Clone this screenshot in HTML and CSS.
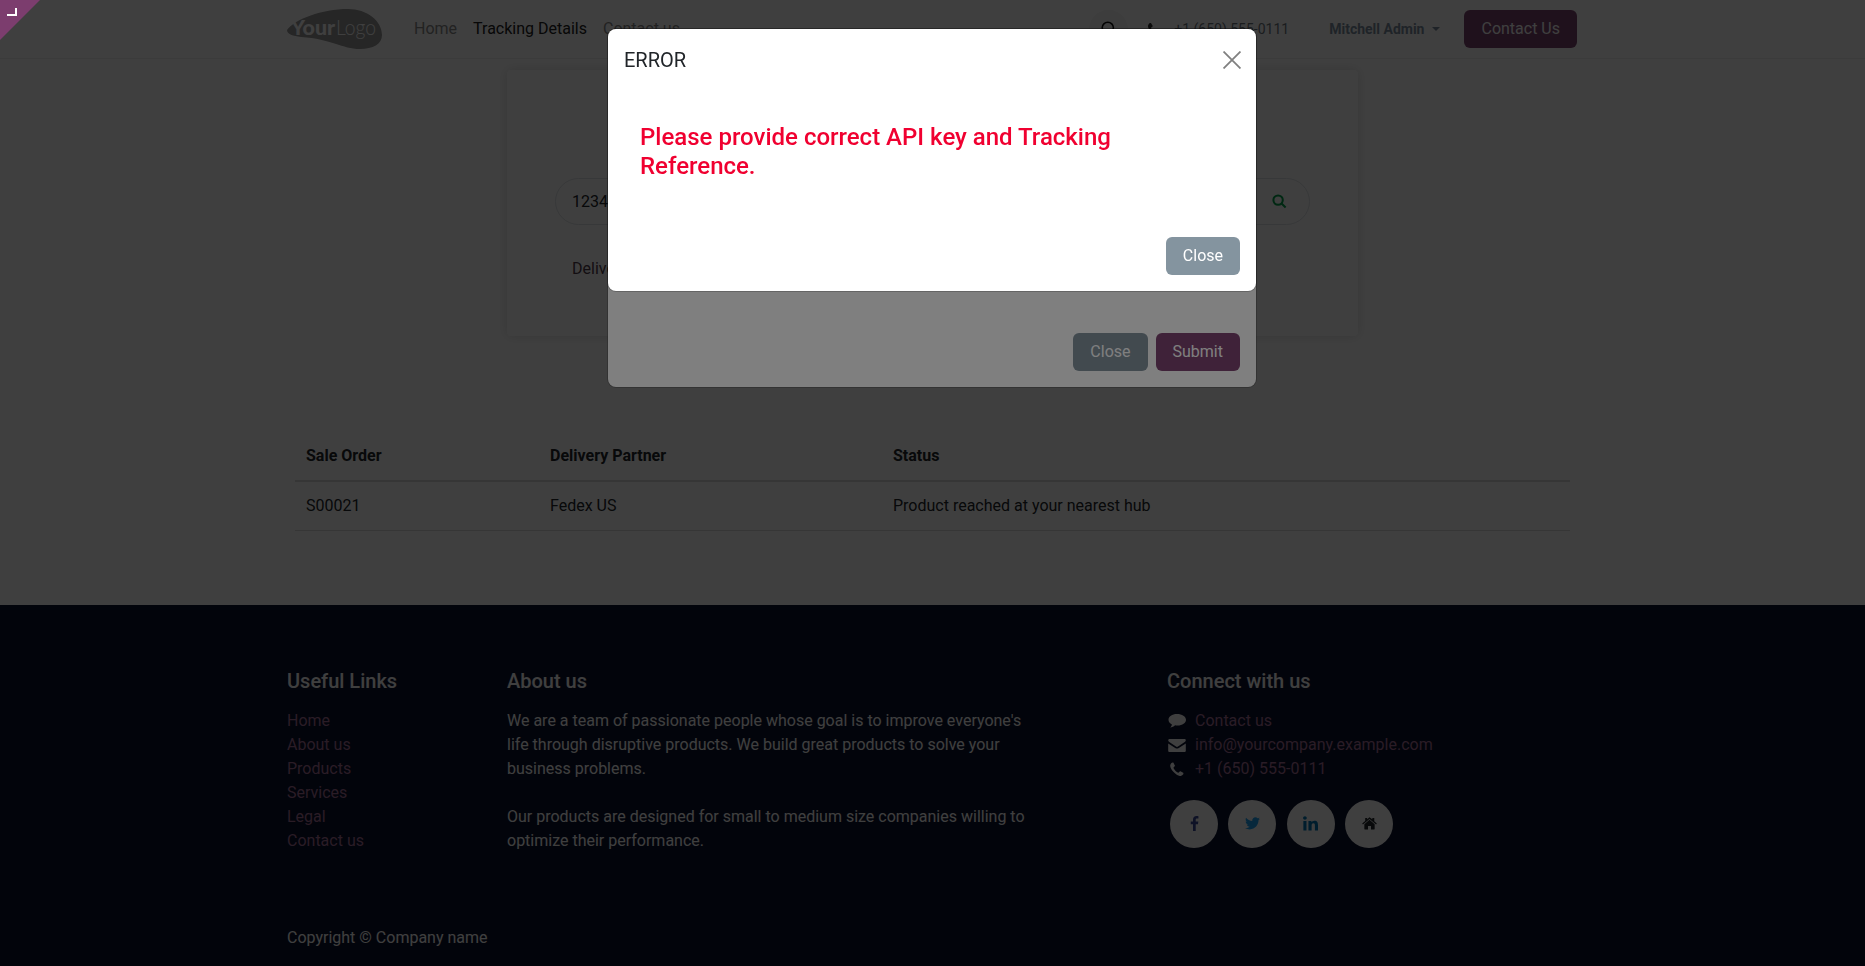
FILE: index.html
```html
<!DOCTYPE html>
<html lang="en">
<head>
  <meta charset="UTF-8" />
  <meta name="viewport" content="width=device-width, initial-scale=1.0" />
  <title>Tracking Details</title>
  <link rel="stylesheet" href="styles.css">
</head>
<body>
  <div id="page">
    <header id="navbar">
      <div class="container nav-row">
        <svg class="logo" viewBox="0 0 95 40">
          <path class="logo-blob" d="M0 21C8 10 35 0 61 0C80 0 95 12 95 26C95 35 86 40 73 40C55 40 45 30 14 28C6 27 0 25 0 21Z"/>
          <text class="logo-your" x="4" y="26" textLength="44" lengthAdjust="spacingAndGlyphs">Your</text>
          <text class="logo-logo" x="49" y="26" textLength="40" lengthAdjust="spacingAndGlyphs">Logo</text>
        </svg>
        <nav class="nav-links">
          <a href="#">Home</a>
          <a href="#" class="active">Tracking Details</a>
          <a href="#">Contact us</a>
        </nav>
        <div class="nav-right">
          <span class="search-circle">
            <svg viewBox="0 0 16 16" class="search-icon"><circle cx="6.8" cy="6.8" r="5.6"/><path d="M11 11l4.2 4.2"/></svg>
          </span>
          <svg class="nav-phone" viewBox="0 0 1408 1408"><path d="M1408 1112q0 27-10 70.5t-21 68.5q-21 50-122 106-94 51-186 51-27 0-53-3.500t-57.500-12.500-47-14.500-55.500-20.500-49-18q-98-35-175-83-127-79-264-216t-216-264q-48-77-83-175-3-9-18-49t-20.500-55.500-14.500-47-12.500-57.500-3.500-53q0-92 51-186 56-101 106-122 25-11 68.500-21t70.500-10q14 0 21 3 18 6 53 76 11 19 30 54t35 63.500 31 53.500q3 4 17.500 25t21.500 35.500 7 28.500q0 20-28.500 50t-62 55-62 53-28.500 46q0 9 5 22.500t8.500 20.500 14 24 11.500 19q76 137 174 235t235 174q2 1 19 11.500t24 14 20.500 8.500 22.500 5q18 0 46-28.500t53-62 55-62 50-28.500q14 0 28.500 7t35.500 21.500 25 17.500q25 15 53.500 31t63.500 35 54 30q70 35 76 53 3 7 3 21z"/></svg>
          <span class="nav-tel">+1 (650) 555-0111</span>
          <span class="nav-user">Mitchell Admin<i class="caret"></i></span>
          <a href="#" class="btn btn-primary">Contact Us</a>
        </div>
      </div>
    </header>

    <main>
      <section class="track-card">
        <div class="track-input">
          <span>1234567890</span>
          <svg viewBox="0 0 16 16" class="track-search"><circle cx="6.5" cy="6.5" r="5"/><path d="M10.200 10.200l4.300 4.300"/></svg>
        </div>
        <p class="track-note">Delivery Partner</p>
      </section>

      <div class="container">
        <table class="orders">
          <thead>
            <tr><th class="col-order">Sale Order</th><th class="col-partner">Delivery Partner</th><th>Status</th></tr>
          </thead>
          <tbody>
            <tr><td>S00021</td><td>Fedex US</td><td>Product reached at your nearest hub</td></tr>
          </tbody>
        </table>
      </div>
    </main>

    <footer id="footer">
      <div class="container">
        <div class="footer-cols">
          <div>
            <h5>Useful Links</h5>
            <ul class="footer-list">
              <li><a href="#">Home</a></li>
              <li><a href="#">About us</a></li>
              <li><a href="#">Products</a></li>
              <li><a href="#">Services</a></li>
              <li><a href="#">Legal</a></li>
              <li><a href="#">Contact us</a></li>
            </ul>
          </div>
          <div>
            <h5>About us</h5>
            <p class="about">We are a team of passionate people whose goal is to improve everyone's life through disruptive products. We build great products to solve your business problems.</p>
            <p class="about">Our products are designed for small to medium size companies willing to optimize their performance.</p>
          </div>
          <div>
            <h5>Connect with us</h5>
            <ul class="footer-list">
              <li class="contact-row">
                <svg viewBox="0 0 18 16"><path d="M9 1C4 1 .5 3.500.5 6.800c0 2 1.300 3.700 3.400 4.700-.2 1.300-.9 2.300-1.800 3 2 0 3.700-.9 4.900-2.200.8.2 1.600.3 2.500.3 5 0 8.500-2.600 8.500-5.800S14 1 9 1z"/></svg>
                <a href="#">Contact us</a>
              </li>
              <li class="contact-row">
                <svg viewBox="0 0 18 16"><path d="M1.500 2h15c.7 0 1.300.6 1.300 1.200 0 .8-.5 1.400-1.100 1.900L10 9.600c-.6.4-1.400.4-2 0L1.300 5.100C.7 4.600.2 4 .2 3.300.2 2.600.8 2 1.500 2zM.2 6.400 7.200 11c1.100.7 2.500.7 3.600 0l7-4.600v7.300c0 .7-.6 1.300-1.300 1.300h-15c-.7 0-1.300-.6-1.300-1.300z"/></svg>
                <a href="#">info@yourcompany.example.com</a>
              </li>
              <li class="contact-row">
                <svg viewBox="-2 -1 18 16"><path d="M13.500 10.800c0 .3-.1.700-.2 1.100-.1.300-.2.500-.3.700-.2.500-1.200 1-2 1.300-.6.200-1.300.1-1.900-.1-1-.3-1.800-.7-2.700-1.300-1.200-.8-2.300-1.800-3.300-2.900-.9-1-1.700-2.100-2.200-3.300C.5 5.400.2 4.600.2 3.700.2 2.800.7 1.800 1.200 1.200 1.600.8 2.300.5 2.800.4c.2 0 .3 0 .4.1.2.1.4.6.5.8.3.5.7 1.300.9 1.800.1.200.3.400.3.700 0 .6-1.400 1.300-1.400 1.900 0 .4.700 1.400 1.100 2 .7 1 1.700 1.900 2.600 2.500.3.200.8.500 1.100.500.6 0 1.300-1.400 1.900-1.400.2 0 .5.200.7.300.5.300 1.300.7 1.800 1 .2.100.7.300.8.500z"/></svg>
                <a href="#">+1 (650) 555-0111</a>
              </li>
            </ul>
            <div class="socials">
              <a href="#" class="social social-fb"><svg viewBox="0 0 16 16"><path d="M9.300 16V8.700h2.400l.4-2.800H9.300V4.100c0-.8.200-1.400 1.400-1.400h1.500V.2C11.900.1 11 0 10 0 7.900 0 6.400 1.300 6.400 3.800v2.100H4v2.800h2.400V16z"/></svg></a>
              <a href="#" class="social social-tw"><svg viewBox="0 0 16 14"><path d="M16 1.900c-.6.3-1.200.4-1.900.5.700-.4 1.200-1 1.400-1.800-.6.400-1.300.6-2.100.8C12.800.7 12 .3 11 .3c-1.800 0-3.300 1.500-3.300 3.300 0 .3 0 .5.100.7C5.100 4.200 2.700 2.900 1.100.9.800 1.400.7 2 .7 2.600c0 1.100.6 2.100 1.500 2.700-.5 0-1-.2-1.500-.4 0 1.600 1.100 2.900 2.600 3.200-.3.100-.6.100-.9.100-.2 0-.4 0-.6-.1.4 1.300 1.600 2.300 3.100 2.300-1.100.9-2.500 1.400-4.100 1.400H0C1.500 12.800 3.200 13.300 5 13.300c6 0 9.400-5 9.400-9.400V3.500c.6-.4 1.200-1 1.600-1.600z"/></svg></a>
              <a href="#" class="social social-in"><svg viewBox="0 0 16 16"><path d="M.4 5.300h3.300V15.500H.4zM2.100.3c1.100 0 1.900.8 1.900 1.800S3.200 3.900 2.100 3.900.1 3.100.1 2.100.9.300 2.100.3zM5.800 5.300h3.200v1.400c.5-.9 1.600-1.700 3.200-1.700 3.200 0 3.800 2.100 3.800 4.900v5.600h-3.300v-5c0-1.200 0-2.700-1.600-2.700s-1.900 1.300-1.900 2.600v5.100H5.800z"/></svg></a>
              <a href="#" class="social social-home"><svg viewBox="0 0 16 14"><path d="M8 3.100 2.500 7.700v5.100c0 .3.200.5.500.5h3.400V9.600h3.200v3.700H13c.3 0 .5-.2.500-.5V7.700zM8 .4 5.500 2.500V1H3.400v3.300L.2 7l.8 1L8 2.100 15 8l.8-1-2.700-2.300V1H11v1.500z"/></svg></a>
            </div>
          </div>
        </div>
        <p class="copyright">Copyright &copy; Company name</p>
      </div>
    </footer>
  </div>

  <!-- first modal, sits under the error one -->
  <div class="backdrop"></div>
  <div class="dialog dialog-lower">
    <div class="dialog-foot">
      <button class="btn btn-secondary">Close</button>
      <button class="btn btn-primary">Submit</button>
    </div>
  </div>

  <!-- error modal -->
  <div class="backdrop"></div>
  <div class="dialog dialog-error">
    <div class="dialog-head">
      <h4>ERROR</h4>
      <svg class="dialog-x" viewBox="0 0 16 16"><path d="M.5.500l15 15M15.500.500l-15 15"/></svg>
    </div>
    <div class="dialog-body">
      <p class="error-msg">Please provide correct API key and Tracking Reference.</p>
    </div>
    <div class="dialog-foot">
      <button class="btn btn-secondary">Close</button>
    </div>
  </div>

  <!-- editor corner -->
  <a href="#" class="corner"><i class="corner-mark"></i></a>
</body>
</html>
```

FILE: styles.css
```css
* {
  box-sizing: border-box;
}

body {
  margin: 0;
  overflow: hidden;
  background: #fff;
  color: #212529;
  font-family: Roboto, "Liberation Sans", sans-serif;
  font-size: 16px;
  line-height: 24px;
}

a {
  text-decoration: none;
}

#page {
  display: flex;
  flex-direction: column;
  height: 966px;
}

.container {
  width: 1320px;
  margin: 0 0 0 272px;
  padding: 0 15px;
}

/* navbar */
#navbar {
  height: 59px;
  border-bottom: 1px solid #ececec;
  flex: none;
}

.nav-row {
  display: flex;
  align-items: center;
  height: 58px;
}

.logo {
  width: 95px;
  height: 40px;
  flex: none;
}

.logo-blob {
  fill: #989898;
}

.logo-your {
  fill: #fff;
  font-family: Lato, Roboto, sans-serif;
  font-size: 21px;
  font-weight: 900;
}

.logo-logo {
  fill: #fff;
  font-family: Lato, Roboto, sans-serif;
  font-size: 21px;
  font-weight: 300;
}

.nav-links {
  display: flex;
  gap: 16px;
  margin-left: 32px;
}

.nav-links a {
  color: #8a8a8a;
}

.nav-links a.active {
  color: #202020;
}

.nav-right {
  display: flex;
  align-items: center;
  margin-left: auto;
}

.search-circle {
  display: flex;
  align-items: center;
  justify-content: center;
  width: 39px;
  height: 39px;
  border-radius: 50%;
  background: #f4f4f4;
}

.search-icon {
  width: 16px;
  height: 16px;
  fill: none;
  stroke: #111;
  stroke-width: 1.6;
}

.nav-phone {
  width: 13px;
  height: 13px;
  margin-left: 20px;
  fill: #333;
}

.nav-tel {
  margin-left: 13px;
  color: #6c757d;
  font-size: 14px;
}

.nav-user {
  display: flex;
  align-items: center;
  margin-left: 40px;
  color: #7c8fa0;
  font-size: 14px;
  font-weight: 700;
}

.caret {
  width: 0;
  height: 0;
  margin-left: 8px;
  border-top: 4px solid #7c8fa0;
  border-left: 4px solid transparent;
  border-right: 4px solid transparent;
}

.nav-user + .btn {
  margin-left: 24px;
}

.btn {
  display: inline-block;
  height: 38px;
  padding: 0 17px;
  border: 0;
  border-radius: 6px;
  font-family: inherit;
  font-size: 16px;
  line-height: 38px;
  color: #fff;
}

.btn-primary {
  background: #7f4472;
}

.btn-secondary {
  background: #84949f;
}

/* tracking card */
.track-card {
  width: 851px;
  height: 266px;
  margin: 11px 0 0 507px;
  padding: 108px 48px 0;
  border-radius: 4px;
  box-shadow: 0 0 12px rgba(0, 0, 0, 0.15);
}

.track-input {
  display: flex;
  align-items: center;
  justify-content: space-between;
  height: 47px;
  padding: 0 22px 0 16px;
  border: 1px solid #dee2e6;
  border-radius: 24px;
}

.track-search {
  width: 15px;
  height: 15px;
  fill: none;
  stroke: #00a04a;
  stroke-width: 2.200;
}

.track-note {
  margin: 32px 0 0 17px;
  color: #4d3a48;
}

/* orders table */
.orders {
  width: 1275px;
  margin: 95px 0 0 8px;
  border-collapse: collapse;
}

.orders th,
.orders td {
  padding: 0 11px;
  text-align: left;
}

.orders th {
  height: 50px;
  font-weight: 700;
  border-bottom: 2px solid #d8d8d8;
}

.orders td {
  height: 49px;
  border-bottom: 1px solid #d8d8d8;
}

.col-order {
  width: 244px;
}

.col-partner {
  width: 343px;
}

/* footer */
#footer {
  flex: 1;
  margin-top: 74px;
  padding-top: 61px;
  background: #0a102c;
  color: #fff;
}

.footer-cols {
  display: grid;
  grid-template-columns: 220px 660px 1fr;
  height: 242px;
}

#footer h5 {
  margin: 0 0 13px;
  font-size: 20px;
  font-weight: 500;
  line-height: 30px;
}

.footer-list {
  margin: 0;
  padding: 0;
  list-style: none;
}

.footer-list a {
  color: #a8709a;
}

.about {
  width: 520px;
  margin: 0 0 24px;
}

.contact-row {
  display: flex;
  align-items: center;
}

.contact-row svg {
  width: 18px;
  height: 16px;
  margin: 0 9px 0 1px;
  fill: #fff;
}

.socials {
  display: flex;
  gap: 10.400px;
  margin: 19px 0 0 3px;
}

.social {
  display: flex;
  align-items: center;
  justify-content: center;
  width: 48px;
  height: 48px;
  border-radius: 50%;
  background: #fff;
}

.social svg {
  width: 15px;
  height: 15px;
}

.social-fb svg {
  fill: #3b4a98;
}

.social-tw svg {
  fill: #1da1f2;
}

.social-in svg {
  fill: #0077b5;
}

.social-home svg {
  fill: #212529;
}

.copyright {
  margin: 0;
  padding-top: 18px;
}

/* modals */
.backdrop {
  position: fixed;
  inset: 0;
  background: rgba(0, 0, 0, 0.5);
}

.dialog {
  position: fixed;
  top: 29px;
  left: 608px;
  display: flex;
  flex-direction: column;
  width: 648px;
  background: #fff;
  border-radius: 8px;
  box-shadow: 0 0 0 1px rgba(0, 0, 0, 0.2);
}

.dialog-lower {
  height: 358px;
  justify-content: flex-end;
}

.dialog-error {
  height: 262px;
}

.dialog-head {
  display: flex;
  align-items: center;
  justify-content: space-between;
  height: 62px;
  padding: 0 15px 0 16px;
}

.dialog-head h4 {
  margin: 0;
  font-size: 20px;
  font-weight: 400;
  color: #212529;
}

.dialog-x {
  width: 18px;
  height: 18px;
  fill: none;
  stroke: #808080;
  stroke-width: 1.600;
}

.dialog-body {
  flex: 1;
  padding: 32px 32px 0;
}

.error-msg {
  width: 500px;
  margin: 0;
  color: #f00030;
  font-size: 24px;
  font-weight: 500;
  line-height: 29px;
}

.dialog-foot {
  display: flex;
  justify-content: flex-end;
  gap: 8px;
  padding: 0 16px 16px;
}

/* editor corner */
.corner {
  position: fixed;
  top: 0;
  left: 0;
  width: 40px;
  height: 40px;
  background: #7c3d6e;
  clip-path: polygon(0 0, 100% 0, 0 100%);
}

.corner-mark {
  position: absolute;
  top: 8px;
  left: 7px;
  width: 10px;
  height: 8px;
  border-right: 2px solid #fff;
  border-bottom: 2px solid #fff;
}
```
